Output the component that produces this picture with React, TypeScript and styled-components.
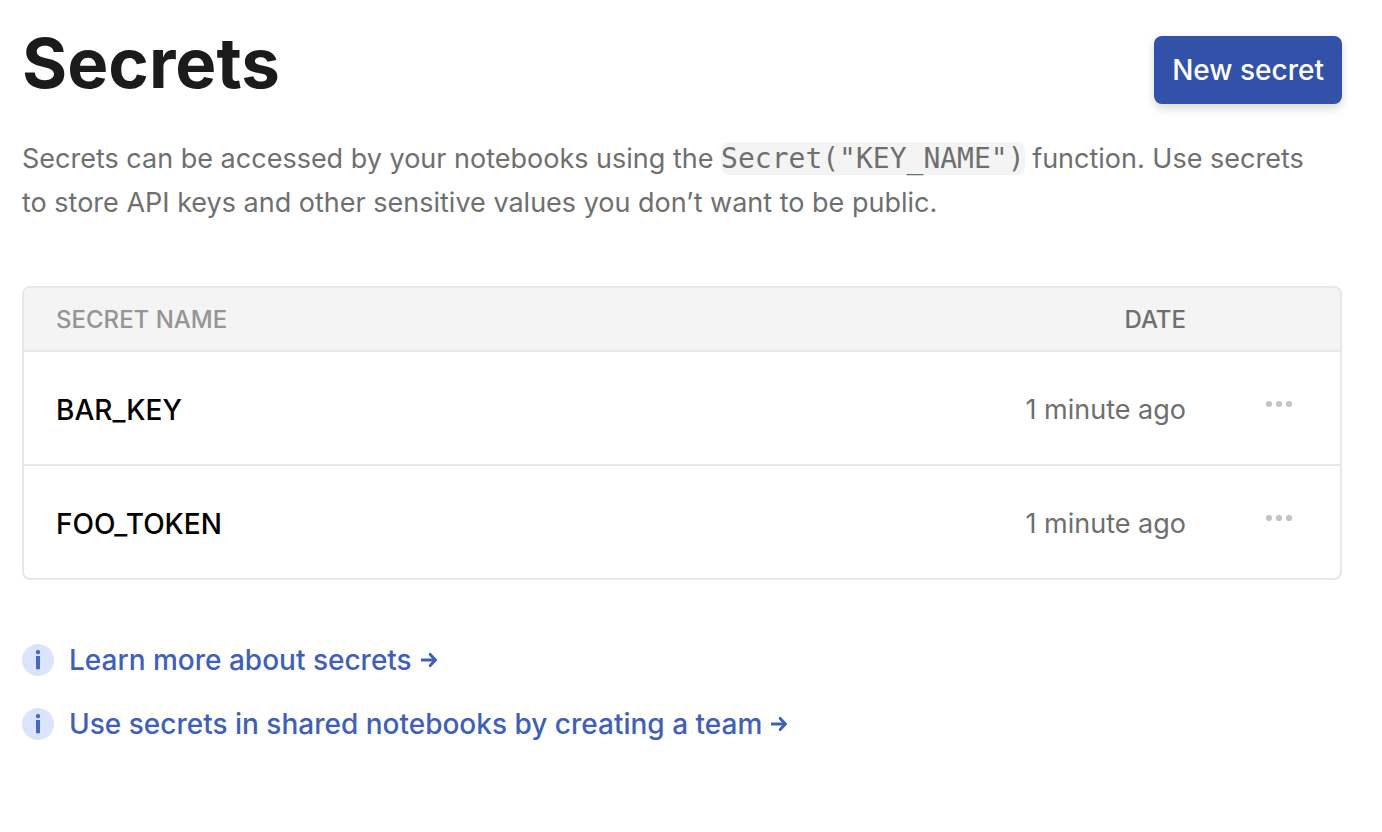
import React from "react";
import styled, { createGlobalStyle } from "styled-components";

const GlobalStyle = createGlobalStyle`
  *, *::before, *::after { box-sizing: border-box; }
  body {
    margin: 0;
    background: #ffffff;
    color: #6f6f6f;
    font-family: Inter, "Liberation Sans", sans-serif;
    font-size: 28px;
    line-height: 44px;
  }
`;

const Page = styled.main`
  padding: 26px 40px 60px 22px;
`;

const Header = styled.header`
  display: flex;
  align-items: flex-end;
  justify-content: space-between;
  height: 78px;
`;

const Title = styled.h1`
  align-self: flex-start;
  margin: 0;
  color: #1b1b1b;
  font-size: 69px;
  font-weight: 700;
  line-height: 74px;
`;

const PrimaryButton = styled.button`
  height: 68px;
  padding: 0 18px;
  border: 0;
  border-radius: 8px;
  background: #3251a8;
  box-shadow: 0 4px 10px rgba(0, 0, 0, 0.16);
  color: #ffffff;
  font: inherit;
  font-weight: 500;
  white-space: nowrap;
  cursor: pointer;
`;

const Intro = styled.p`
  margin: 33px 0 61px;
  padding-right: 20px;
  font-size: 27px;
`;

const Code = styled.code`
  border-radius: 8px;
  background: #f4f4f4;
  font-family: "DejaVu Sans Mono", monospace;
  font-size: 28px;
  line-height: 28px;
`;

const TableFrame = styled.div`
  overflow: hidden;
  border: 2px solid #e7e7e7;
  border-radius: 8px;
`;

const Table = styled.table`
  width: 100%;
  border-collapse: collapse;
`;

const Row = styled.tr`
  & + & { border-top: 2px solid #e7e7e7; }
`;

const HeadRow = styled.tr`
  border-bottom: 2px solid #e7e7e7;
  background: #f4f4f4;
`;

const HeadCell = styled.th<{ $date?: boolean }>`
  padding: 10px 32px 8px;
  color: ${(p) => (p.$date ? "#6f6f6f" : "#959595")};
  font-size: 24px;
  font-weight: 500;
  text-align: ${(p) => (p.$date ? "right" : "left")};
`;

const NameCell = styled.th`
  padding: 36px 32px 32px;
  color: #000000;
  font-weight: 500;
  text-align: left;
`;

const DateCell = styled.td`
  padding: 36px 32px 32px;
  font-size: 27px;
  text-align: right;
  white-space: nowrap;
`;

const ActionCell = styled.td`
  width: 122px;
  padding: 0 44px 12px 0;
  text-align: right;
`;

const MenuButton = styled.button`
  display: inline-flex;
  align-items: center;
  justify-content: center;
  width: 34px;
  height: 32px;
  padding: 0;
  border: 0;
  background: none;
  color: #c4c4c4;
  vertical-align: middle;
  cursor: pointer;
`;

const Links = styled.ul`
  display: flex;
  flex-direction: column;
  gap: 20px;
  margin: 58px 0 0;
  padding: 0;
  list-style: none;
`;

const LinkItem = styled.li`
  display: flex;
  align-items: center;
  gap: 15px;
`;

const HelpLink = styled.a`
  display: inline-flex;
  align-items: center;
  gap: 8px;
  color: #3f60b9;
  font-weight: 500;
  text-decoration: none;
`;

const Dots = () => (
  <svg width="28" height="8" viewBox="0 0 28 8" fill="currentColor" aria-hidden="true">
    <circle cx="4" cy="4" r="3.1" />
    <circle cx="14" cy="4" r="3.1" />
    <circle cx="24" cy="4" r="3.1" />
  </svg>
);

const InfoIcon = () => (
  <svg width="32" height="32" viewBox="0 0 32 32" aria-hidden="true">
    <circle cx="16" cy="16" r="16" fill="#dbe3fe" />
    <circle cx="16" cy="8.1" r="2.2" fill="#4467c9" />
    <rect x="14" y="12" width="4" height="13.2" fill="#4467c9" />
  </svg>
);

const Arrow = () => (
  <svg width="18" height="16" viewBox="0 0 18 16" fill="none" stroke="currentColor" strokeWidth="3" aria-hidden="true">
    <path d="M1 8H15" />
    <path d="M10.2 2.4L15.4 8L10.2 13.6" strokeLinecap="round" />
  </svg>
);

const secrets = [
  { name: "BAR_KEY", date: "1 minute ago" },
  { name: "FOO_TOKEN", date: "1 minute ago" },
];

const helpLinks = ["Learn more about secrets", "Use secrets in shared notebooks by creating a team"];

export default function App() {
  return (
    <>
      <GlobalStyle />
      <Page>
        <Header>
          <Title>Secrets</Title>
          <PrimaryButton type="button">New secret</PrimaryButton>
        </Header>
        <Intro>
          Secrets can be accessed by your notebooks using the <Code>Secret("KEY_NAME")</Code> function. Use secrets to
          store API keys and other sensitive values you don’t want to be public.
        </Intro>
        <TableFrame>
          <Table>
            <thead>
              <HeadRow>
                <HeadCell scope="col">SECRET NAME</HeadCell>
                <HeadCell scope="col" $date>DATE</HeadCell>
                <HeadCell as="td" />
              </HeadRow>
            </thead>
            <tbody>
              {secrets.map((s) => (
                <Row key={s.name}>
                  <NameCell scope="row">{s.name}</NameCell>
                  <DateCell>{s.date}</DateCell>
                  <ActionCell>
                    <MenuButton type="button" aria-label={`Actions for ${s.name}`}>
                      <Dots />
                    </MenuButton>
                  </ActionCell>
                </Row>
              ))}
            </tbody>
          </Table>
        </TableFrame>
        <Links>
          {helpLinks.map((label) => (
            <LinkItem key={label}>
              <InfoIcon />
              <HelpLink href="#">
                {label}
                <Arrow />
              </HelpLink>
            </LinkItem>
          ))}
        </Links>
      </Page>
    </>
  );
}
